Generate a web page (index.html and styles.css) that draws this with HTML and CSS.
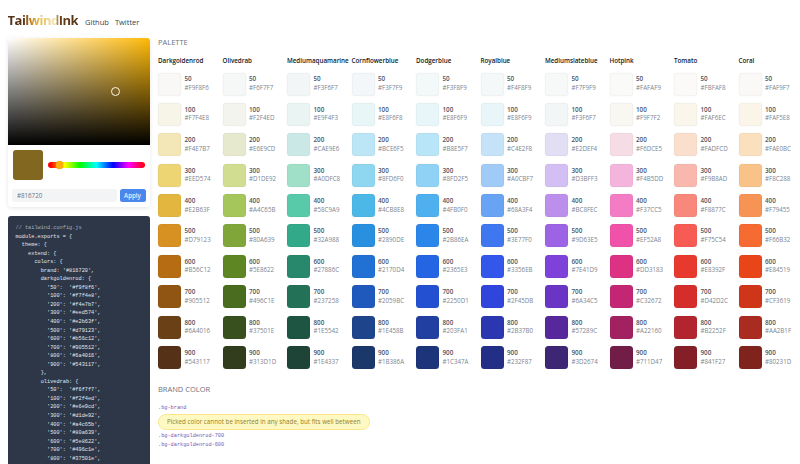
FILE: index.html
```html
<!DOCTYPE html>
<html lang="en">
<head>
    <meta charset="UTF-8" />
    <title>Tailwind Ink</title>
    <link rel="stylesheet" href="styles.css">
</head>
<body>
<header class="topbar">
    <a class="logo" href="#">TailwindInk</a>
    <a class="nav-link" href="#">Github</a>
    <a class="nav-link" href="#">Twitter</a>
</header>

<div class="layout">
    <aside class="sidebar">
        <div class="picker-card">
            <div class="sat-box"><span class="sat-thumb"></span></div>
            <div class="picker-row">
                <div class="picked"></div>
                <div class="hue-bar"><span class="hue-thumb"></span></div>
            </div>
            <div class="hex-row">
                <input class="hex-input" type="text" value="#816720">
                <button class="apply-btn">Apply</button>
            </div>
        </div>
<pre class="code-card"><span class="code-comment">// tailwind.config.js</span>
module.exports = {
  theme: {
    extend: {
      colors: {
        brand: '#816720',
        darkgoldenrod: {
          '50':  '#f9f8f6',
          '100': '#f7f4e8',
          '200': '#f4e7b7',
          '300': '#eed574',
          '400': '#e2b63f',
          '500': '#d79123',
          '600': '#b56c12',
          '700': '#905512',
          '800': '#6a4016',
          '900': '#543117',
        },
        olivedrab: {
          '50':  '#f6f7f7',
          '100': '#f2f4ed',
          '200': '#e6e9cd',
          '300': '#d1de92',
          '400': '#a4c65b',
          '500': '#80a639',
          '600': '#5e8622',
          '700': '#496c1e',
          '800': '#37501e',</pre>
    </aside>

    <main class="content">
        <h2 class="section-title">PALETTE</h2>
        <div class="palette">
            <section class="col">
                <h3 class="col-name">Darkgoldenrod</h3>
                <div class="shade"><div class="chip" style="background:#F9F8F6"></div><p class="num">50<span class="hex">#F9F8F6</span></p></div>
                <div class="shade"><div class="chip" style="background:#F7F4E8"></div><p class="num">100<span class="hex">#F7F4E8</span></p></div>
                <div class="shade"><div class="chip" style="background:#F4E7B7"></div><p class="num">200<span class="hex">#F4E7B7</span></p></div>
                <div class="shade"><div class="chip" style="background:#EED574"></div><p class="num">300<span class="hex">#EED574</span></p></div>
                <div class="shade"><div class="chip" style="background:#E2B63F"></div><p class="num">400<span class="hex">#E2B63F</span></p></div>
                <div class="shade"><div class="chip" style="background:#D79123"></div><p class="num">500<span class="hex">#D79123</span></p></div>
                <div class="shade"><div class="chip" style="background:#B56C12"></div><p class="num">600<span class="hex">#B56C12</span></p></div>
                <div class="shade"><div class="chip" style="background:#905512"></div><p class="num">700<span class="hex">#905512</span></p></div>
                <div class="shade"><div class="chip" style="background:#6A4016"></div><p class="num">800<span class="hex">#6A4016</span></p></div>
                <div class="shade"><div class="chip" style="background:#543117"></div><p class="num">900<span class="hex">#543117</span></p></div>
            </section>
            <section class="col">
                <h3 class="col-name">Olivedrab</h3>
                <div class="shade"><div class="chip" style="background:#F6F7F7"></div><p class="num">50<span class="hex">#F6F7F7</span></p></div>
                <div class="shade"><div class="chip" style="background:#F2F4ED"></div><p class="num">100<span class="hex">#F2F4ED</span></p></div>
                <div class="shade"><div class="chip" style="background:#E6E9CD"></div><p class="num">200<span class="hex">#E6E9CD</span></p></div>
                <div class="shade"><div class="chip" style="background:#D1DE92"></div><p class="num">300<span class="hex">#D1DE92</span></p></div>
                <div class="shade"><div class="chip" style="background:#A4C65B"></div><p class="num">400<span class="hex">#A4C65B</span></p></div>
                <div class="shade"><div class="chip" style="background:#80A639"></div><p class="num">500<span class="hex">#80A639</span></p></div>
                <div class="shade"><div class="chip" style="background:#5E8622"></div><p class="num">600<span class="hex">#5E8622</span></p></div>
                <div class="shade"><div class="chip" style="background:#496C1E"></div><p class="num">700<span class="hex">#496C1E</span></p></div>
                <div class="shade"><div class="chip" style="background:#37501E"></div><p class="num">800<span class="hex">#37501E</span></p></div>
                <div class="shade"><div class="chip" style="background:#313D1D"></div><p class="num">900<span class="hex">#313D1D</span></p></div>
            </section>
            <section class="col">
                <h3 class="col-name">Mediumaquamarine</h3>
                <div class="shade"><div class="chip" style="background:#F3F6F7"></div><p class="num">50<span class="hex">#F3F6F7</span></p></div>
                <div class="shade"><div class="chip" style="background:#E9F4F3"></div><p class="num">100<span class="hex">#E9F4F3</span></p></div>
                <div class="shade"><div class="chip" style="background:#CAE9E6"></div><p class="num">200<span class="hex">#CAE9E6</span></p></div>
                <div class="shade"><div class="chip" style="background:#A0DFC8"></div><p class="num">300<span class="hex">#A0DFC8</span></p></div>
                <div class="shade"><div class="chip" style="background:#58C9A9"></div><p class="num">400<span class="hex">#58C9A9</span></p></div>
                <div class="shade"><div class="chip" style="background:#32A988"></div><p class="num">500<span class="hex">#32A988</span></p></div>
                <div class="shade"><div class="chip" style="background:#27886C"></div><p class="num">600<span class="hex">#27886C</span></p></div>
                <div class="shade"><div class="chip" style="background:#237258"></div><p class="num">700<span class="hex">#237258</span></p></div>
                <div class="shade"><div class="chip" style="background:#1E5542"></div><p class="num">800<span class="hex">#1E5542</span></p></div>
                <div class="shade"><div class="chip" style="background:#1E4337"></div><p class="num">900<span class="hex">#1E4337</span></p></div>
            </section>
            <section class="col">
                <h3 class="col-name">Cornflowerblue</h3>
                <div class="shade"><div class="chip" style="background:#F3F7F9"></div><p class="num">50<span class="hex">#F3F7F9</span></p></div>
                <div class="shade"><div class="chip" style="background:#E8F6F8"></div><p class="num">100<span class="hex">#E8F6F8</span></p></div>
                <div class="shade"><div class="chip" style="background:#BCE6F5"></div><p class="num">200<span class="hex">#BCE6F5</span></p></div>
                <div class="shade"><div class="chip" style="background:#8FD6F0"></div><p class="num">300<span class="hex">#8FD6F0</span></p></div>
                <div class="shade"><div class="chip" style="background:#4CB8E8"></div><p class="num">400<span class="hex">#4CB8E8</span></p></div>
                <div class="shade"><div class="chip" style="background:#2890DE"></div><p class="num">500<span class="hex">#2890DE</span></p></div>
                <div class="shade"><div class="chip" style="background:#2170D4"></div><p class="num">600<span class="hex">#2170D4</span></p></div>
                <div class="shade"><div class="chip" style="background:#2059BC"></div><p class="num">700<span class="hex">#2059BC</span></p></div>
                <div class="shade"><div class="chip" style="background:#1E458B"></div><p class="num">800<span class="hex">#1E458B</span></p></div>
                <div class="shade"><div class="chip" style="background:#1B386A"></div><p class="num">900<span class="hex">#1B386A</span></p></div>
            </section>
            <section class="col">
                <h3 class="col-name">Dodgerblue</h3>
                <div class="shade"><div class="chip" style="background:#F3F8F9"></div><p class="num">50<span class="hex">#F3F8F9</span></p></div>
                <div class="shade"><div class="chip" style="background:#E8F6F9"></div><p class="num">100<span class="hex">#E8F6F9</span></p></div>
                <div class="shade"><div class="chip" style="background:#B8E5F7"></div><p class="num">200<span class="hex">#B8E5F7</span></p></div>
                <div class="shade"><div class="chip" style="background:#8FD2F5"></div><p class="num">300<span class="hex">#8FD2F5</span></p></div>
                <div class="shade"><div class="chip" style="background:#4FB0F0"></div><p class="num">400<span class="hex">#4FB0F0</span></p></div>
                <div class="shade"><div class="chip" style="background:#2B86EA"></div><p class="num">500<span class="hex">#2B86EA</span></p></div>
                <div class="shade"><div class="chip" style="background:#2365E3"></div><p class="num">600<span class="hex">#2365E3</span></p></div>
                <div class="shade"><div class="chip" style="background:#2250D1"></div><p class="num">700<span class="hex">#2250D1</span></p></div>
                <div class="shade"><div class="chip" style="background:#203FA1"></div><p class="num">800<span class="hex">#203FA1</span></p></div>
                <div class="shade"><div class="chip" style="background:#1C347A"></div><p class="num">900<span class="hex">#1C347A</span></p></div>
            </section>
            <section class="col">
                <h3 class="col-name">Royalblue</h3>
                <div class="shade"><div class="chip" style="background:#F4F8F9"></div><p class="num">50<span class="hex">#F4F8F9</span></p></div>
                <div class="shade"><div class="chip" style="background:#E8F6F9"></div><p class="num">100<span class="hex">#E8F6F9</span></p></div>
                <div class="shade"><div class="chip" style="background:#C4E2F8"></div><p class="num">200<span class="hex">#C4E2F8</span></p></div>
                <div class="shade"><div class="chip" style="background:#A0CBF7"></div><p class="num">300<span class="hex">#A0CBF7</span></p></div>
                <div class="shade"><div class="chip" style="background:#68A3F4"></div><p class="num">400<span class="hex">#68A3F4</span></p></div>
                <div class="shade"><div class="chip" style="background:#3E77F0"></div><p class="num">500<span class="hex">#3E77F0</span></p></div>
                <div class="shade"><div class="chip" style="background:#3356EB"></div><p class="num">600<span class="hex">#3356EB</span></p></div>
                <div class="shade"><div class="chip" style="background:#2F45DB"></div><p class="num">700<span class="hex">#2F45DB</span></p></div>
                <div class="shade"><div class="chip" style="background:#2B37B0"></div><p class="num">800<span class="hex">#2B37B0</span></p></div>
                <div class="shade"><div class="chip" style="background:#232F87"></div><p class="num">900<span class="hex">#232F87</span></p></div>
            </section>
            <section class="col">
                <h3 class="col-name">Mediumslateblue</h3>
                <div class="shade"><div class="chip" style="background:#F7F9F9"></div><p class="num">50<span class="hex">#F7F9F9</span></p></div>
                <div class="shade"><div class="chip" style="background:#F3F6F7"></div><p class="num">100<span class="hex">#F3F6F7</span></p></div>
                <div class="shade"><div class="chip" style="background:#E2DEF4"></div><p class="num">200<span class="hex">#E2DEF4</span></p></div>
                <div class="shade"><div class="chip" style="background:#D3BFF3"></div><p class="num">300<span class="hex">#D3BFF3</span></p></div>
                <div class="shade"><div class="chip" style="background:#BC8FEC"></div><p class="num">400<span class="hex">#BC8FEC</span></p></div>
                <div class="shade"><div class="chip" style="background:#9D63E5"></div><p class="num">500<span class="hex">#9D63E5</span></p></div>
                <div class="shade"><div class="chip" style="background:#7E41D9"></div><p class="num">600<span class="hex">#7E41D9</span></p></div>
                <div class="shade"><div class="chip" style="background:#6A34C5"></div><p class="num">700<span class="hex">#6A34C5</span></p></div>
                <div class="shade"><div class="chip" style="background:#57289C"></div><p class="num">800<span class="hex">#57289C</span></p></div>
                <div class="shade"><div class="chip" style="background:#3D2674"></div><p class="num">900<span class="hex">#3D2674</span></p></div>
            </section>
            <section class="col">
                <h3 class="col-name">Hotpink</h3>
                <div class="shade"><div class="chip" style="background:#FAFAF9"></div><p class="num">50<span class="hex">#FAFAF9</span></p></div>
                <div class="shade"><div class="chip" style="background:#F9F7F2"></div><p class="num">100<span class="hex">#F9F7F2</span></p></div>
                <div class="shade"><div class="chip" style="background:#F6DCE5"></div><p class="num">200<span class="hex">#F6DCE5</span></p></div>
                <div class="shade"><div class="chip" style="background:#F4B5DD"></div><p class="num">300<span class="hex">#F4B5DD</span></p></div>
                <div class="shade"><div class="chip" style="background:#F37CC5"></div><p class="num">400<span class="hex">#F37CC5</span></p></div>
                <div class="shade"><div class="chip" style="background:#EF52A8"></div><p class="num">500<span class="hex">#EF52A8</span></p></div>
                <div class="shade"><div class="chip" style="background:#DD3183"></div><p class="num">600<span class="hex">#DD3183</span></p></div>
                <div class="shade"><div class="chip" style="background:#C32672"></div><p class="num">700<span class="hex">#C32672</span></p></div>
                <div class="shade"><div class="chip" style="background:#A22160"></div><p class="num">800<span class="hex">#A22160</span></p></div>
                <div class="shade"><div class="chip" style="background:#711D47"></div><p class="num">900<span class="hex">#711D47</span></p></div>
            </section>
            <section class="col">
                <h3 class="col-name">Tomato</h3>
                <div class="shade"><div class="chip" style="background:#FBFAF8"></div><p class="num">50<span class="hex">#FBFAF8</span></p></div>
                <div class="shade"><div class="chip" style="background:#FAF6EC"></div><p class="num">100<span class="hex">#FAF6EC</span></p></div>
                <div class="shade"><div class="chip" style="background:#FADFCD"></div><p class="num">200<span class="hex">#FADFCD</span></p></div>
                <div class="shade"><div class="chip" style="background:#F9B8AD"></div><p class="num">300<span class="hex">#F9B8AD</span></p></div>
                <div class="shade"><div class="chip" style="background:#F8877C"></div><p class="num">400<span class="hex">#F8877C</span></p></div>
                <div class="shade"><div class="chip" style="background:#F75C54"></div><p class="num">500<span class="hex">#F75C54</span></p></div>
                <div class="shade"><div class="chip" style="background:#E8392F"></div><p class="num">600<span class="hex">#E8392F</span></p></div>
                <div class="shade"><div class="chip" style="background:#D42D2C"></div><p class="num">700<span class="hex">#D42D2C</span></p></div>
                <div class="shade"><div class="chip" style="background:#B2252F"></div><p class="num">800<span class="hex">#B2252F</span></p></div>
                <div class="shade"><div class="chip" style="background:#841F27"></div><p class="num">900<span class="hex">#841F27</span></p></div>
            </section>
            <section class="col">
                <h3 class="col-name">Coral</h3>
                <div class="shade"><div class="chip" style="background:#FAF9F7"></div><p class="num">50<span class="hex">#FAF9F7</span></p></div>
                <div class="shade"><div class="chip" style="background:#FAF5E8"></div><p class="num">100<span class="hex">#FAF5E8</span></p></div>
                <div class="shade"><div class="chip" style="background:#FAE0BC"></div><p class="num">200<span class="hex">#FAE0BC</span></p></div>
                <div class="shade"><div class="chip" style="background:#F8C288"></div><p class="num">300<span class="hex">#F8C288</span></p></div>
                <div class="shade"><div class="chip" style="background:#F79455"></div><p class="num">400<span class="hex">#F79455</span></p></div>
                <div class="shade"><div class="chip" style="background:#F66B32"></div><p class="num">500<span class="hex">#F66B32</span></p></div>
                <div class="shade"><div class="chip" style="background:#E84519"></div><p class="num">600<span class="hex">#E84519</span></p></div>
                <div class="shade"><div class="chip" style="background:#CF3619"></div><p class="num">700<span class="hex">#CF3619</span></p></div>
                <div class="shade"><div class="chip" style="background:#AA2B1F"></div><p class="num">800<span class="hex">#AA2B1F</span></p></div>
                <div class="shade"><div class="chip" style="background:#80231D"></div><p class="num">900<span class="hex">#80231D</span></p></div>
            </section>
        </div>

        <h2 class="section-title brand-title">BRAND COLOR</h2>
        <code class="bg-class">.bg-brand</code>
        <p class="notice">Picked color cannot be inserted in any shade, but fits well between</p>
        <code class="bg-class">.bg-darkgoldenrod-700</code>
        <code class="bg-class">.bg-darkgoldenrod-600</code>
    </main>
</div>
</body>
</html>
```

FILE: styles.css
```css
body {
    margin: 0;
    height: 100vh;
    overflow: hidden;
    display: flex;
    flex-direction: column;
    font-family: 'Open Sans', 'Noto Sans', sans-serif;
    background-color: #fff;
    color: #374151;
}

.topbar {
    display: flex;
    align-items: baseline;
    height: 38px;
    flex-shrink: 0;
    box-sizing: border-box;
    padding: 12px 0 0 7.5px;
}

.logo {
    font-size: 13px;
    font-weight: 700;
    line-height: 16px;
    letter-spacing: -0.5px;
    text-decoration: none;
    margin-right: 7px;
    background: linear-gradient(90deg, #543117 0, #543117 22%, #b56c12 30%, #e2b63f 42%, #f4e7b7 68%, #6a4016 73%, #543117 100%);
    -webkit-background-clip: text;
    background-clip: text;
    color: transparent;
}

.nav-link {
    font-size: 7.5px;
    color: #374151;
    text-decoration: none;
    margin-right: 6px;
    position: relative;
    top: -0.5px;
}

.layout {
    display: flex;
    flex-grow: 1;
    min-height: 0;
    padding-left: 7.5px;
}

.sidebar {
    display: flex;
    flex-direction: column;
    width: 142.5px;
    flex-shrink: 0;
}

.picker-card {
    background: #fff;
    border-radius: 3px;
    overflow: hidden;
    box-shadow: 0 1px 4px rgba(0,0,0,0.1);
    height: 169px;
    flex-shrink: 0;
}

.sat-box {
    position: relative;
    height: 107px;
    background:
        linear-gradient(to top, #000, transparent),
        linear-gradient(to right, #fff, #ffba08);
}

.sat-thumb {
    position: absolute;
    left: 103px;
    top: 49px;
    width: 7px;
    height: 7px;
    border: 1px solid #fdf6e0;
    border-radius: 50%;
}

.picker-row {
    display: flex;
    align-items: center;
    gap: 4.5px;
    padding: 4.5px 5px 0;
}

.picked {
    width: 30.5px;
    height: 30.5px;
    border-radius: 3px;
    background-color: #816720;
}

.hue-bar {
    position: relative;
    flex-grow: 1;
    height: 6.5px;
    border-radius: 4px;
    background: linear-gradient(to right, #f00, #f00 3%, #ff0 17%, #0f0 33%, #0ff 50%, #00f 67%, #f0f 83%, #f00);
}

.hue-thumb {
    position: absolute;
    left: 8px;
    top: -0.5px;
    width: 7.5px;
    height: 7.5px;
    border-radius: 50%;
    background-color: #ffae0a;
    box-shadow: 0 0 1px rgba(120,70,0,0.6);
}

.hex-row {
    display: flex;
    gap: 2.5px;
    padding: 9px 4.5px 0;
}

.hex-input {
    width: 105px;
    height: 13px;
    box-sizing: border-box;
    padding: 0 5px;
    border: none;
    border-radius: 2.5px;
    background-color: #f3f4f6;
    font-family: inherit;
    font-size: 6.2px;
    color: #6b7280;
}

.apply-btn {
    flex-grow: 1;
    height: 13px;
    padding: 0;
    border: none;
    border-radius: 2.5px;
    background-color: #4a87ec;
    color: #e6effd;
    font-family: inherit;
    font-size: 6.2px;
    font-weight: 600;
}

.code-card {
    margin: 9px 0 0;
    padding: 8px;
    flex-grow: 1;
    min-height: 0;
    box-sizing: border-box;
    border-radius: 3px 3px 0 0;
    background-color: #2d3748;
    color: #e2e8f0;
    font-family: 'Liberation Mono', monospace;
    font-size: 5.25px;
    line-height: 8.55px;
    overflow: hidden;
}

.code-comment {
    color: #a0aec0;
}

.content {
    flex-grow: 1;
    padding-left: 8px;
    margin-top: -1px;
}

.section-title {
    margin: 0;
    font-size: 7.5px;
    font-weight: 400;
    line-height: 10px;
    color: #6b7280;
}

.palette {
    display: flex;
    margin-top: 9px;
}

.col {
    width: 64.5px;
    flex-shrink: 0;
}

.col-name {
    margin: 0 0 7.5px;
    font-size: 6.25px;
    font-weight: 600;
    line-height: 9px;
    white-space: nowrap;
    color: #111827;
}

.shade {
    display: flex;
    align-items: center;
    gap: 3.5px;
    margin-bottom: 7.4px;
}

.chip {
    width: 23px;
    height: 23px;
    flex-shrink: 0;
    border-radius: 3.5px;
    box-shadow: inset 0 0 0 0.5px rgba(0,0,0,0.05), 0 0 1.5px rgba(0,0,0,0.08);
}

.num {
    margin: 0;
    font-size: 6.3px;
    font-weight: 600;
    line-height: 8.6px;
    color: #4b5563;
}

.hex {
    display: block;
    font-size: 6.2px;
    font-weight: 400;
    color: #7d8591;
    white-space: nowrap;
}

.brand-title {
    margin-top: 8px;
}

.bg-class {
    display: block;
    font-family: 'Liberation Mono', monospace;
    font-size: 5.25px;
    line-height: 8.5px;
    color: #6d5bb5;
}

.brand-title + .bg-class {
    margin-top: 10px;
}

.notice {
    width: fit-content;
    margin: 1.5px 0 2.5px;
    padding: 0 8px;
    font-size: 6.25px;
    line-height: 13.5px;
    color: #92801f;
    background-color: #fef9c3;
    border: 0.5px solid #fde68a;
    border-radius: 8px;
}
```
